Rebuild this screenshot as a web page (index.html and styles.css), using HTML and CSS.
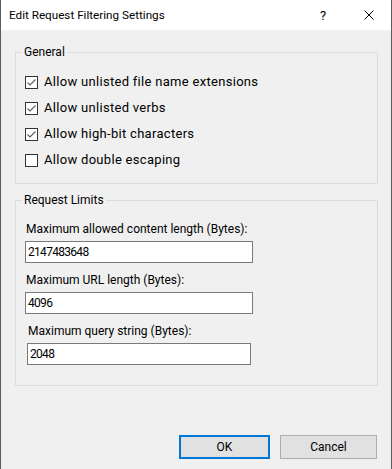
FILE: index.html
```html
<!DOCTYPE html>
<html lang="en">
<head>
    <meta charset="UTF-8">
    <meta name="viewport" content="width=device-width, initial-scale=1.0">
    <title>Edit Request Filtering Settings</title>
    <link rel="stylesheet" href="styles.css">
</head>
<body>
    <div class="dialog">
        <header class="titlebar">
            <span class="title">Edit Request Filtering Settings</span>
            <span class="help">?</span>
            <span class="close">
                <svg width="10" height="10" viewBox="0 0 10 10">
                    <path d="M0.5 0.5 L9.5 9.5 M9.5 0.5 L0.5 9.5" stroke="#000" stroke-width="1" fill="none"/>
                </svg>
            </span>
        </header>

        <main class="content">
            <fieldset class="group">
                <legend>General</legend>
                <label class="check"><span class="box checked"></span>Allow unlisted file name extensions</label>
                <label class="check"><span class="box checked"></span>Allow unlisted verbs</label>
                <label class="check"><span class="box checked"></span>Allow high-bit characters</label>
                <label class="check"><span class="box"></span>Allow double escaping</label>
            </fieldset>

            <fieldset class="group limits">
                <legend>Request Limits</legend>
                <div class="field">
                    <span class="field-label">Maximum allowed content length (Bytes):</span>
                    <span class="text-input">2147483648</span>
                </div>
                <div class="field">
                    <span class="field-label">Maximum URL length (Bytes):</span>
                    <span class="text-input">4096</span>
                </div>
                <div class="field shifted">
                    <span class="field-label">Maximum query string (Bytes):</span>
                    <span class="text-input">2048</span>
                </div>
            </fieldset>

            <div class="buttons">
                <span class="btn btn-default">OK</span>
                <span class="btn btn-cancel">Cancel</span>
            </div>
        </main>
    </div>
</body>
</html>
```

FILE: styles.css
```css
html{
    box-sizing: border-box;
    font-family: "Segoe UI", Roboto, "Liberation Sans", sans-serif;
    font-size: 12px;
}

*,
*:after,
*:before{
    box-sizing: inherit;
}

body{
    margin: 0;
    background: #f0f0f0;
    color: #000;
}

.dialog{
    width: 392px;
    height: 469px;
    border-left: 1px solid #5b5b5b;
    border-right: 1px solid #5b5b5b;
    background: #f0f0f0;
    display: flex;
    flex-direction: column;
}

/* title bar */
.titlebar{
    height: 30px;
    background: #fff;
    display: flex;
    align-items: center;
    padding-left: 8px;
}

.title{
    flex: 1;
    line-height: 16px;
    font-size: 11.7px;
}

.help{
    width: 46px;
    text-align: center;
    font-size: 13px;
}

.close{
    width: 45px;
    height: 30px;
    display: flex;
    align-items: center;
    justify-content: center;
}

.close svg{
    display: block;
}

/* body */
.content{
    flex: 1;
    padding: 14px 13px 0 14px;
    display: flex;
    flex-direction: column;
}

.group{
    margin: 0;
    border: 1px solid #dcdcdc;
    padding: 14px 9px 15px 9px;
    display: flex;
    flex-direction: column;
    gap: 10px;
}

.group legend{
    padding: 0 2px;
    margin-left: -3px;
    line-height: 16px;
}

.limits{
    margin-top: 8px;
    padding-top: 13px;
    padding-bottom: 20px;
    gap: 9px;
}

.check{
    display: flex;
    align-items: center;
    gap: 6px;
    line-height: 16px;
    height: 16px;
    font-size: 13px;
    letter-spacing: .3px;
}

.box{
    width: 13px;
    height: 13px;
    border: 1px solid #333;
    background: #fff;
    flex: none;
}

.box.checked{
    background: #fff url("data:image/svg+xml;utf8,<svg xmlns='http://www.w3.org/2000/svg' width='11' height='11' viewBox='0 0 11 11'><path d='M1.5 5.5 L4 8 L9.5 2.5' stroke='%23606060' stroke-width='1.2' fill='none'/></svg>") no-repeat center;
}

.field{
    display: flex;
    flex-direction: column;
    gap: 4px;
}

.field-label{
    line-height: 16px;
    padding-left: 1px;
}

.text-input{
    width: 228px;
    height: 22px;
    border: 1px solid #7a7a7a;
    background: #fff;
    padding: 0 2px;
    line-height: 20px;
    letter-spacing: -.7px;
}

.shifted{
    padding-left: 2px;
}

.shifted .text-input{
    width: 224px;
}

/* buttons */
.buttons{
    margin-top: auto;
    margin-bottom: 10px;
    display: flex;
    justify-content: flex-end;
    gap: 10px;
    padding-right: 1px;
}

.btn{
    height: 24px;
    background: #e1e1e1;
    display: flex;
    align-items: center;
    justify-content: center;
}

.btn-default{
    width: 91px;
    border: 2px solid #0078d7;
}

.btn-cancel{
    width: 97px;
    border: 1px solid #adadad;
}
```
